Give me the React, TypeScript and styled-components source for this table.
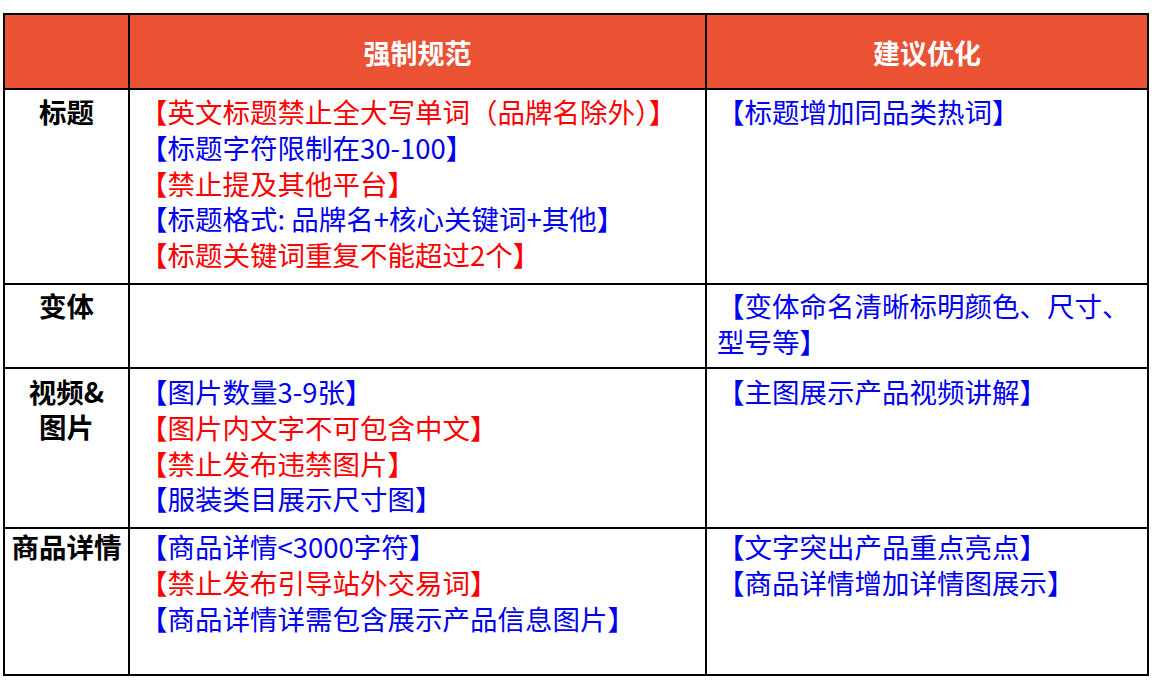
import React from 'react'
import styled, { createGlobalStyle } from 'styled-components'

const GlobalStyle = createGlobalStyle`
  html, body {
    margin: 0;
    padding: 0;
    background: #ffffff;
  }
  body {
    font-family: "Noto Sans CJK SC", "Noto Sans", sans-serif;
  }
`

type Tone = 'red' | 'blue'

interface Row {
  label: React.ReactNode
  rules: [Tone, string][]
  tips: [Tone, string][]
  height: number
  padTop: number
}

const rows: Row[] = [
  {
    label: '标题',
    rules: [
      ['red', '【英文标题禁止全大写单词（品牌名除外）】'],
      ['blue', '【标题字符限制在30-100】'],
      ['red', '【禁止提及其他平台】'],
      ['blue', '【标题格式: 品牌名+核心关键词+其他】'],
      ['red', '【标题关键词重复不能超过2个】']
    ],
    tips: [['blue', '【标题增加同品类热词】']],
    height: 193,
    padTop: 4
  },
  {
    label: '变体',
    rules: [],
    tips: [['blue', '【变体命名清晰标明颜色、尺寸、型号等】']],
    height: 82,
    padTop: 3
  },
  {
    label: (
      <>
        视频&amp;
        <br />
        图片
      </>
    ),
    rules: [
      ['blue', '【图片数量3-9张】'],
      ['red', '【图片内文字不可包含中文】'],
      ['red', '【禁止发布违禁图片】'],
      ['blue', '【服装类目展示尺寸图】']
    ],
    tips: [['blue', '【主图展示产品视频讲解】']],
    height: 158,
    padTop: 5
  },
  {
    label: '商品详情',
    rules: [
      ['blue', '【商品详情<3000字符】'],
      ['red', '【禁止发布引导站外交易词】'],
      ['blue', '【商品详情详需包含展示产品信息图片】']
    ],
    tips: [
      ['blue', '【文字突出产品重点亮点】'],
      ['blue', '【商品详情增加详情图展示】']
    ],
    height: 145,
    padTop: 0
  }
]

export default function App() {
  return (
    <Page>
      <GlobalStyle />
      <Grid>
        <HeadCell />
        <HeadCell>强制规范</HeadCell>
        <HeadCell>建议优化</HeadCell>
        {rows.map((row, i) => (
          <React.Fragment key={i}>
            <LabelCell $h={row.height} $pad={row.padTop}>
              {row.label}
            </LabelCell>
            <TextCell $h={row.height} $pad={row.padTop}>
              {row.rules.map(([tone, text], j) => (
                <Line key={j} $tone={tone}>
                  {text}
                </Line>
              ))}
            </TextCell>
            <TextCell $h={row.height} $pad={row.padTop}>
              {row.tips.map(([tone, text], j) => (
                <Line key={j} $tone={tone}>
                  {text}
                </Line>
              ))}
            </TextCell>
          </React.Fragment>
        ))}
      </Grid>
    </Page>
  )
}

const Page = styled.div`
  padding: 13px 0 0 3px;
  width: 1155px;
  height: 684px;
  box-sizing: border-box;
`

const Grid = styled.div`
  display: grid;
  grid-template-columns: 123px 575px 440px;
  grid-auto-rows: auto;
  gap: 2px;
  padding: 2px;
  background: #000000;
  width: 1146px;
  box-sizing: border-box;
`

const HeadCell = styled.div`
  height: 73px;
  background: #eb5133;
  color: #ffffff;
  font-size: 27px;
  font-weight: 700;
  display: flex;
  align-items: center;
  justify-content: center;
  padding-top: 2px;
  box-sizing: border-box;
`

const LabelCell = styled.div<{ $h: number; $pad: number }>`
  height: ${(p) => p.$h}px;
  box-sizing: border-box;
  padding-top: ${(p) => p.$pad}px;
  background: #ffffff;
  color: #000000;
  font-size: 27.5px;
  font-weight: 700;
  line-height: 35px;
  text-align: center;
`

const TextCell = styled.div<{ $h: number; $pad: number }>`
  height: ${(p) => p.$h}px;
  box-sizing: border-box;
  padding: ${(p) => p.$pad}px 8px 0 10px;
  background: #ffffff;
  font-size: 27.5px;
  line-height: 35.8px;
`

const Line = styled.div<{ $tone: Tone }>`
  color: ${(p) => (p.$tone === 'red' ? '#ff0000' : '#0000f0')};
`
